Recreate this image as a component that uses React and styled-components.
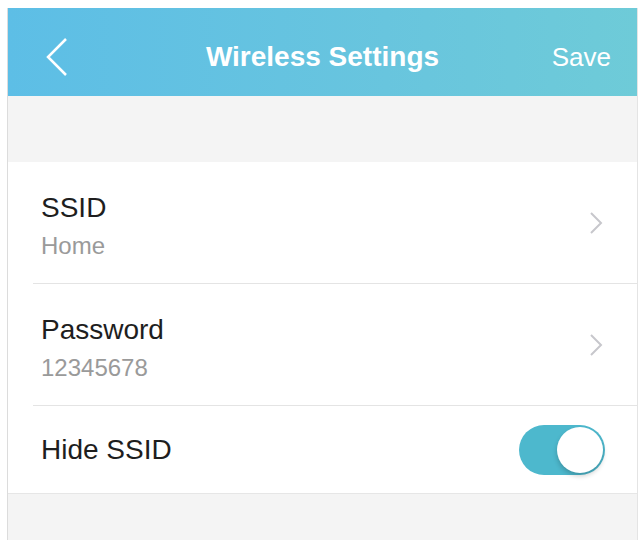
import React, { useState } from 'react';
import styled, { createGlobalStyle } from 'styled-components';

const GlobalStyle = createGlobalStyle`
  html, body {
    margin: 0;
    padding: 0;
    background: #ffffff;
  }
  body {
    font-family: "Liberation Sans", Arial, sans-serif;
  }
`;

const Frame = styled.div`
  margin: 8px 0 0 7px;
  width: 631px;
  height: 532px;
  box-sizing: border-box;
  border-left: 1px solid #dcdcdc;
  border-right: 1px solid #e4e4e4;
  background: #f4f4f4;
  display: flex;
  flex-direction: column;
`;

const Header = styled.header`
  height: 88px;
  box-sizing: border-box;
  flex-shrink: 0;
  display: flex;
  align-items: center;
  justify-content: space-between;
  padding: 10px 26px 0 36px;
  background: linear-gradient(90deg, #5dbee6 0%, #68c5de 60%, #6ecbd8 100%);
  color: #ffffff;
  position: relative;
`;

const BackButton = styled.button`
  background: none;
  border: none;
  padding: 0;
  width: 28px;
  height: 40px;
  display: flex;
  align-items: center;
  cursor: pointer;
`;

const Title = styled.h1`
  position: absolute;
  left: 0;
  right: 0;
  top: 10px;
  bottom: 0;
  display: flex;
  align-items: center;
  justify-content: center;
  margin: 0;
  font-size: 28px;
  font-weight: 700;
  pointer-events: none;
`;

const SaveButton = styled.button`
  background: none;
  border: none;
  padding: 0;
  color: #ffffff;
  font-family: inherit;
  font-size: 26px;
  cursor: pointer;
`;

const Spacer = styled.div`
  height: 66px;
  flex-shrink: 0;
`;

const List = styled.div`
  background: #ffffff;
  border-bottom: 1px solid #e6e6e6;
`;

const Row = styled.div`
  height: ${(p) => p.$height}px;
  margin-left: 25px;
  padding: 0 33px 0 8px;
  display: flex;
  align-items: center;
  justify-content: space-between;
  border-bottom: ${(p) => (p.$last ? 'none' : '1px solid #e4e4e4')};
`;

const Texts = styled.div`
  display: flex;
  flex-direction: column;
  gap: 8px;
  margin-top: 6px;
`;

const Label = styled.div`
  font-size: 28px;
  color: #1e1e1e;
  line-height: 32px;
`;

const Value = styled.div`
  font-size: 24px;
  color: #9a9a9a;
  line-height: 28px;
`;

const Toggle = styled.button`
  width: 86px;
  height: 50px;
  border-radius: 25px;
  border: none;
  padding: 0;
  background: ${(p) => (p.$on ? '#4db8cd' : '#d6d6d6')};
  display: flex;
  align-items: center;
  justify-content: ${(p) => (p.$on ? 'flex-end' : 'flex-start')};
  cursor: pointer;
  margin-right: -1px;
`;

const Knob = styled.span`
  width: 46px;
  height: 46px;
  margin: 0 2px;
  border-radius: 50%;
  background: #ffffff;
  box-shadow: 0 3px 5px rgba(0, 0, 0, 0.2);
`;

const Chevron = () => (
  <svg width="16" height="26" viewBox="0 0 16 26">
    <polyline points="3,3 13,13 3,23" fill="none" stroke="#c7c7cc" strokeWidth="2" />
  </svg>
);

const BackIcon = () => (
  <svg width="26" height="40" viewBox="0 0 26 40">
    <polyline points="22,2 4,20 22,38" fill="none" stroke="#ffffff" strokeWidth="2.5" />
  </svg>
);

export default function App() {
  const [hidden, setHidden] = useState(true);

  return (
    <>
      <GlobalStyle />
      <Frame>
        <Header>
          <BackButton aria-label="Back">
            <BackIcon />
          </BackButton>
          <Title>Wireless Settings</Title>
          <SaveButton>Save</SaveButton>
        </Header>
        <Spacer />
        <List>
          <Row $height={121}>
            <Texts>
              <Label>SSID</Label>
              <Value>Home</Value>
            </Texts>
            <Chevron />
          </Row>
          <Row $height={121}>
            <Texts>
              <Label>Password</Label>
              <Value>12345678</Value>
            </Texts>
            <Chevron />
          </Row>
          <Row $height={87} $last>
            <Label>Hide SSID</Label>
            <Toggle $on={hidden} onClick={() => setHidden(!hidden)} aria-label="Hide SSID">
              <Knob />
            </Toggle>
          </Row>
        </List>
      </Frame>
    </>
  );
}
